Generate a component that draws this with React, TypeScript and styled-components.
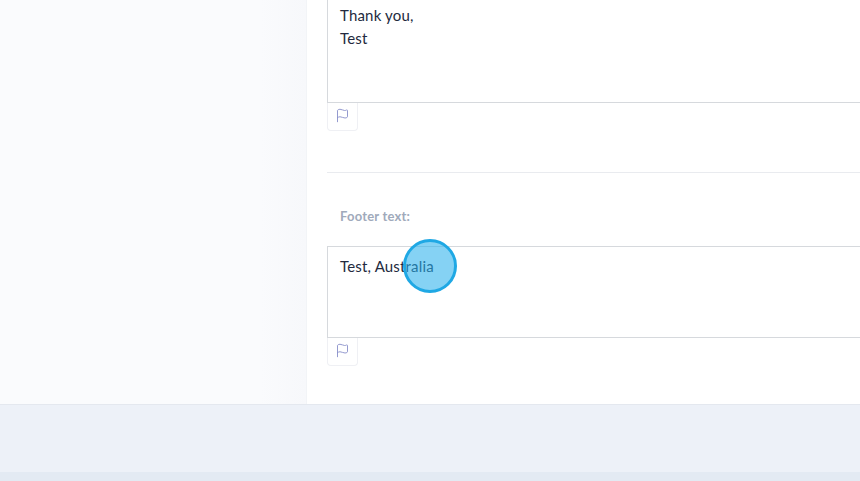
import styled, { createGlobalStyle } from 'styled-components';
import { Flag } from 'lucide-react';

const GlobalStyle = createGlobalStyle`
  html, body {
    margin: 0;
    padding: 0;
    background: #fff;
  }
  * {
    box-sizing: border-box;
  }
`;

const Page = styled.div`
  position: relative;
  width: 860px;
  height: 481px;
  overflow: hidden;
  display: flex;
  flex-direction: column;
  font-family: Lato, 'Liberation Sans', sans-serif;
`;

const Main = styled.div`
  display: flex;
  height: 405px;
  border-bottom: 1px solid #e4e8ef;
`;

const Sidebar = styled.aside`
  width: 307px;
  flex-shrink: 0;
  background: linear-gradient(to right, #fafbfd 85%, #f7f8fb 100%);
  border-right: 1px solid #f2f4f7;
`;

const Content = styled.main`
  flex: 1;
  min-width: 0;
  padding-left: 20px;
  background: #fff;
`;

const TextBox = styled.div<{ $height: number; $open?: boolean }>`
  width: 560px;
  height: ${(p) => p.$height}px;
  padding: ${(p) => (p.$open ? '4px' : '8px')} 12px 0;
  border: 1px solid #d6d9dd;
  border-right: none;
  border-top: ${(p) => (p.$open ? 'none' : '1px solid #d6d9dd')};
  font-size: 15px;
  line-height: 23px;
  letter-spacing: 0.18px;
  color: #232a3e;
`;

const FlagButton = styled.button`
  display: flex;
  align-items: center;
  justify-content: center;
  width: 31px;
  height: 28px;
  padding: 0 0 3px;
  background: #fff;
  border: 1px solid #eff0f4;
  border-top: none;
  border-radius: 0 0 4px 4px;
  color: #858cc8;
`;

const Divider = styled.hr`
  margin: 41px 0 0;
  border: none;
  border-top: 1px solid #e9ebef;
`;

const Label = styled.div`
  padding: 35px 0 21px 13px;
  font-size: 13px;
  line-height: 17px;
  font-weight: 700;
  letter-spacing: 0.2px;
  color: #a0aabb;
`;

const Band = styled.div`
  height: 67px;
  background: #edf1f8;
`;

const BottomBar = styled.div`
  flex: 1;
  background: #e3eaf3;
`;

const ClickMarker = styled.div`
  position: absolute;
  left: 403px;
  top: 239px;
  width: 54px;
  height: 54px;
  border-radius: 50%;
  border: 3px solid #1fa8e4;
  background: rgba(40, 175, 235, 0.57);
`;

export default function App() {
  return (
    <Page>
      <GlobalStyle />
      <Main>
        <Sidebar />
        <Content>
          <TextBox $height={103} $open>
            Thank you,
            <br />
            Test
          </TextBox>
          <FlagButton>
            <Flag size={15} strokeWidth={1.4} />
          </FlagButton>
          <Divider />
          <Label>Footer text:</Label>
          <TextBox $height={92}>Test, Australia</TextBox>
          <FlagButton>
            <Flag size={15} strokeWidth={1.4} />
          </FlagButton>
        </Content>
      </Main>
      <Band />
      <BottomBar />
      <ClickMarker />
    </Page>
  );
}
